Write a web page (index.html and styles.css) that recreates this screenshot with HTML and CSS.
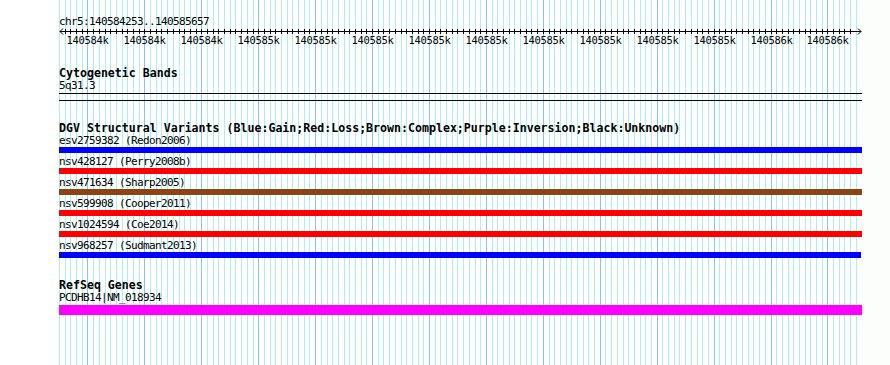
FILE: index.html
```html
<!DOCTYPE html>
<html lang="en">
<head>
  <meta charset="UTF-8" />
  <meta name="viewport" content="width=device-width, initial-scale=1" />
  <title>chr5:140584253..140585657</title>
  <link rel="stylesheet" href="styles.css">
</head>
<body>
  <div class="panel">
    <svg class="grid" id="grid" width="862" height="365"></svg>

    <div class="locus">chr5:140584253..140585657</div>
    <svg class="ruler" id="ruler" width="803" height="20"></svg>

    <section class="track track-cyto">
      <div class="track-title">Cytogenetic Bands</div>
      <div class="feature-label">5q31.3</div>
      <div class="band"></div>
    </section>

    <section class="track track-dgv">
      <div class="track-title">DGV Structural Variants (Blue:Gain;Red:Loss;Brown:Complex;Purple:Inversion;Black:Unknown)</div>
      <div class="feature">
        <div class="feature-label">esv2759382 (Redon2006)</div>
        <div class="bar gain"></div>
      </div>
      <div class="feature">
        <div class="feature-label">nsv428127 (Perry2008b)</div>
        <div class="bar loss"></div>
      </div>
      <div class="feature">
        <div class="feature-label">nsv471634 (Sharp2005)</div>
        <div class="bar complex"></div>
      </div>
      <div class="feature">
        <div class="feature-label">nsv599908 (Cooper2011)</div>
        <div class="bar loss"></div>
      </div>
      <div class="feature">
        <div class="feature-label">nsv1024594 (Coe2014)</div>
        <div class="bar loss"></div>
      </div>
      <div class="feature">
        <div class="feature-label">nsv968257 (Sudmant2013)</div>
        <div class="bar gain" style="width: 802px;"></div>
      </div>
    </section>

    <section class="track track-genes">
      <div class="track-title">RefSeq Genes</div>
      <div class="feature-label gene-label">PCDHB14|NM_018934</div>
      <div class="bar gene"></div>
    </section>
  </div>

  <script>
    const SVG_NS = "http://www.w3.org/2000/svg";
    const grid = document.getElementById("grid");
    const ruler = document.getElementById("ruler");

    // 10 bp per minor step, first step sits on the left edge of the panel
    const left = 59;
    const step = 5.692;
    const steps = 140;
    const labels = ["140584k", "140584k", "140584k",
      "140585k", "140585k", "140585k", "140585k", "140585k",
      "140585k", "140585k", "140585k", "140585k",
      "140586k", "140586k"];

    function el(name, attrs, parent) {
      const node = document.createElementNS(SVG_NS, name);
      for (const key in attrs) node.setAttribute(key, attrs[key]);
      parent.appendChild(node);
      return node;
    }

    // Grid lines
    for (let k = 0; k <= steps; k++) {
      const x = Math.round(left + k * step) + 0.5;
      const major = k % 10 === 5;
      el("line", {
        x1: x, y1: 0, x2: x, y2: 365,
        class: major ? "grid-major" : "grid-minor"
      }, grid);
    }

    // Ruler: baseline, ticks, arrows, labels (coords relative to panel)
    el("line", { x1: 1, y1: 3.5, x2: 802, y2: 3.5, class: "ruler-line" }, ruler);
    el("polyline", { points: "4,0.5 1,3.5 4,6.5", class: "ruler-line" }, ruler);
    el("polyline", { points: "799,0.5 802,3.5 799,6.5", class: "ruler-line" }, ruler);

    for (let k = 1; k < steps; k++) {
      const x = Math.round(left + k * step) - left + 0.5;
      el("line", { x1: x, y1: 1, x2: x, y2: 6, class: "ruler-line" }, ruler);
    }

    labels.forEach((text, i) => {
      const k = 5 + i * 10;
      const x = Math.round(left + k * step) - left + 0.5;
      const label = el("text", { x: x, y: 16, class: "ruler-label" }, ruler);
      label.textContent = text;
    });
  </script>
</body>
</html>
```

FILE: styles.css
```css
/* Base styles */
body {
  margin: 0;
  background-color: #fbfefb;
  color: #000;
  font-family: 'DejaVu Sans Mono', 'Liberation Mono', monospace;
}

.panel {
  position: relative;
  width: 803px;
  min-height: 350px;
  padding: 15px 0 0 59px;
  background-color: #fff;
}

/* Background grid */
.grid {
  position: absolute;
  top: 0;
  left: 0;
}

.grid-minor {
  stroke: #afeeee;
  stroke-width: 1;
}

.grid-major {
  stroke: #87c4ee;
  stroke-width: 1;
}

.locus,
.ruler,
.track {
  position: relative;
}

/* Locus line and ruler */
.locus {
  font-size: 11px;
  letter-spacing: -0.62px;
  line-height: 13px;
}

.ruler {
  display: block;
}

.ruler-line {
  stroke: #000;
  stroke-width: 1;
  fill: none;
}

.ruler-label {
  font-family: 'DejaVu Sans Mono', monospace;
  font-size: 10.5px;
  letter-spacing: -0.32px;
  text-anchor: middle;
  fill: #000;
}

/* Tracks */
.track-title {
  height: 12px;
  padding-top: 1px;
  font-size: 11.6px;
  font-weight: bold;
  line-height: 13px;
  white-space: nowrap;
}

.feature-label {
  position: relative;
  z-index: 1;
  font-size: 11px;
  letter-spacing: -0.62px;
  line-height: 13px;
  white-space: nowrap;
}

.track-cyto {
  margin-top: 18px;
}

.band {
  height: 6px;
  margin-top: 1px;
  border-top: 1px solid #000;
  border-bottom: 1px solid #000;
}

.track-dgv {
  margin-top: 20px;
}

.feature + .feature {
  margin-top: 2px;
}

.track-genes {
  margin-top: 21px;
}

/* tighter title/label pair so the underscore clears the gene bar */
.track-genes .track-title {
  height: 13px;
  padding-top: 0;
}

.gene-label {
  line-height: 11px;
  margin-bottom: 2px;
}

.bar {
  height: 6px;
}

.bar.gain {
  background-color: #0000ff;
}

.bar.loss {
  background-color: #ff0000;
}

.bar.complex {
  background-color: #8b4513;
}

.bar.gene {
  height: 10px;
  background-color: #ff00ff;
}
```
